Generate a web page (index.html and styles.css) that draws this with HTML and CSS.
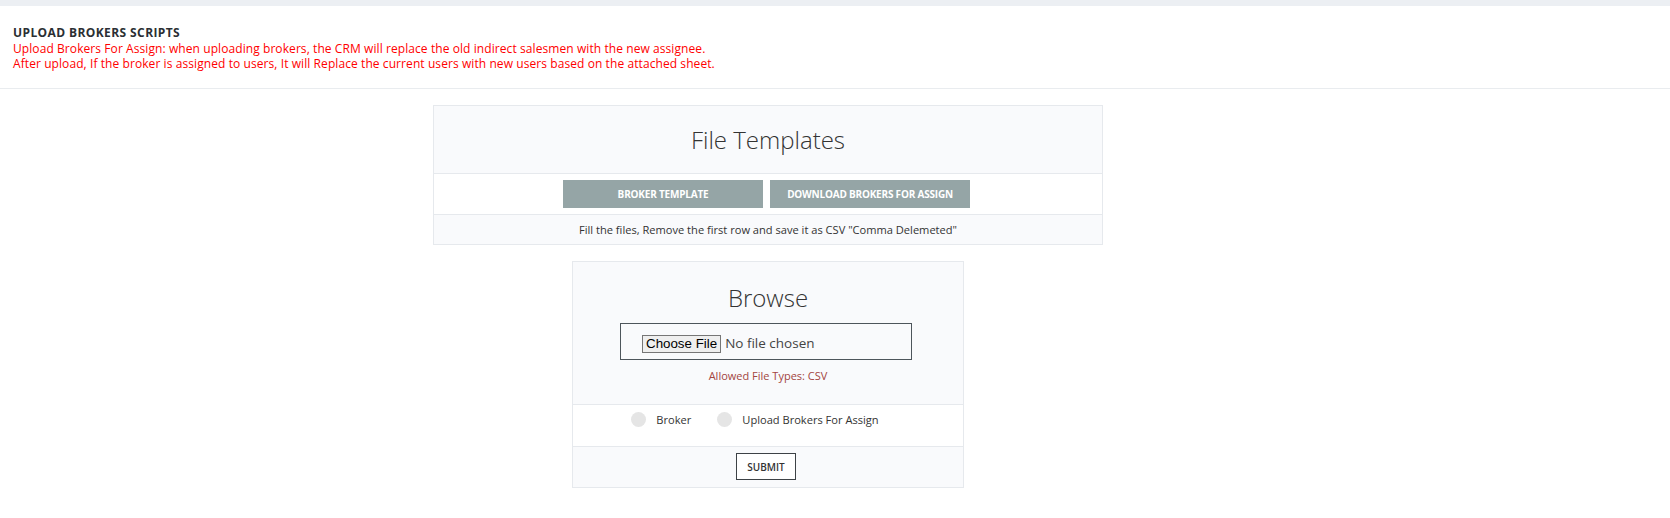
FILE: index.html
```html
<!DOCTYPE html>
<html lang="en">
<head>
<meta charset="utf-8">
<title>Upload Brokers Scripts</title>
<link rel="stylesheet" href="styles.css">
</head>
<body>
<div class="topbar"></div>
<header class="page-header">
  <h1 class="page-title">UPLOAD BROKERS SCRIPTS</h1>
  <p class="page-note">Upload Brokers For Assign: when uploading brokers, the CRM will replace the old indirect salesmen with the new assignee.<br>After upload, If the broker is assigned to users, It will Replace the current users with new users based on the attached sheet.</p>
</header>
<main class="main">
  <section class="card templates">
    <h2 class="card-title">File Templates</h2>
    <div class="card-actions">
      <a class="tpl-btn">BROKER TEMPLATE</a>
      <a class="tpl-btn">DOWNLOAD BROKERS FOR ASSIGN</a>
    </div>
    <div class="card-foot">Fill the files, Remove the first row and save it as CSV "Comma Delemeted"</div>
  </section>
  <form class="card browse">
    <div class="browse-head">
      <h2 class="card-title">Browse</h2>
      <input class="file-input" type="file">
      <div class="allowed">Allowed File Types: CSV</div>
    </div>
    <div class="radio-row">
      <label class="radio"><span class="dot"></span>Broker</label>
      <label class="radio"><span class="dot"></span>Upload Brokers For Assign</label>
    </div>
    <div class="submit-row">
      <button class="submit" type="button">SUBMIT</button>
    </div>
  </form>
</main>
</body>
</html>
```

FILE: styles.css
```css
* { box-sizing: border-box; }
html, body { margin: 0; padding: 0; background: #fff; }
body { font-family: "Open Sans", "Liberation Sans", sans-serif; color: #333; }

.topbar { height: 6px; background: #eceff3; }

.page-header {
  padding: 20px 13px 17px;
  border-bottom: 1px solid #e9ecef;
}
.page-title {
  margin: 0;
  font-size: 12px;
  line-height: 14.4px;
  font-weight: 700;
  letter-spacing: 0.4px;
  color: #2b2f33;
}
.page-note {
  margin: 2px 0 0;
  font-size: 12px;
  line-height: 14.4px;
  letter-spacing: 0.08px;
  color: #ff0000;
}

.main {
  width: 1536px;
  padding-top: 16px;
  display: flex;
  flex-direction: column;
  align-items: center;
  gap: 16px;
}

.card {
  border: 1px solid #e6e9ed;
  background: #f9fafc;
}
.templates { width: 670px; }
.browse { width: 392px; margin: 0; }

.card-title {
  margin: 0;
  font-size: 24px;
  line-height: 35px;
  font-weight: 300;
  color: #333;
  text-align: center;
}
.templates .card-title { padding: 16px 0; border-bottom: 1px solid #e6e9ed; }

.card-actions {
  height: 41px;
  padding: 6px 3px 6px 0;
  display: flex;
  justify-content: center;
  gap: 7px;
  background: #fff;
  border-bottom: 1px solid #e6e9ed;
}
.tpl-btn {
  width: 200px;
  height: 28px;
  display: flex;
  align-items: center;
  justify-content: center;
  background: #95a5a6;
  color: #fff;
  font-size: 10px;
  font-weight: 700;
  letter-spacing: -0.2px;
}
.card-foot {
  height: 29px;
  line-height: 29px;
  font-size: 11.1px;
  text-align: center;
  color: #333;
}

.browse-head {
  padding: 18px 0 21px;
  border-bottom: 1px solid #e6e9ed;
  display: flex;
  flex-direction: column;
  align-items: center;
}
.file-input {
  margin-top: 8px;
  margin-right: 4px;
  width: 292px;
  height: 37px;
  padding: 10px 21px 0;
  border: 1px solid #4d555b;
  background: transparent;
  font-family: "Open Sans", "Liberation Sans", sans-serif;
  font-size: 13.5px;
  color: #444;
}
.file-input::file-selector-button {
  font-family: "Liberation Sans", Arial, sans-serif;
  font-size: 13.33px;
  height: 18px;
  padding: 0 3px;
  margin-right: 4px;
  border: 1px solid #767676;
  border-radius: 0;
  background: #efefef;
  color: #000;
}
.allowed {
  margin-top: 8px;
  font-size: 11px;
  line-height: 15px;
  color: #a3453f;
}

.radio-row {
  height: 42px;
  padding: 7px 0 19px;
  background: #fff;
  border-bottom: 1px solid #e6e9ed;
  display: flex;
  justify-content: center;
}
.radio {
  display: flex;
  align-items: center;
  gap: 10px;
  margin-right: 26px;
  font-size: 11.1px;
  line-height: 15px;
  color: #333;
}
.dot {
  width: 15px;
  height: 15px;
  border-radius: 50%;
  background: #e5e5e5;
}

.submit-row {
  padding: 6px 0 7px;
  display: flex;
  justify-content: center;
}
.submit {
  width: 60px;
  height: 27px;
  padding: 0;
  margin-right: 4px;
  border: 1px solid #3d4246;
  background: #fff;
  font-family: "Open Sans", "Liberation Sans", sans-serif;
  font-size: 10px;
  font-weight: 600;
  color: #333;
}
```
